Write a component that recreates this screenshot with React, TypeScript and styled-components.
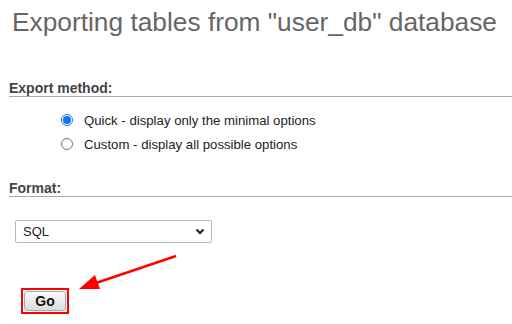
import React from "react";
import styled, { createGlobalStyle } from "styled-components";

const Global = createGlobalStyle`
  html, body { margin: 0; padding: 0; background: #fff; }
  body { font-family: "Liberation Sans", Arial, sans-serif; width: 512px; height: 324px; overflow: hidden; }
`;

const Page = styled.div`
  position: relative;
  width: 512px;
  height: 324px;
  padding: 6px 0 0 9px;
  box-sizing: border-box;
`;

const Title = styled.h2`
  margin: 0 0 0 3px;
  font-size: 26.3px;
  font-weight: normal;
  color: #666;
  line-height: 32px;
  white-space: nowrap;
`;

const Section = styled.div<{ $top: number }>`
  margin-top: ${(p) => p.$top}px;
`;

const Legend = styled.h3`
  margin: 0;
  font-size: 14px;
  font-weight: bold;
  color: #444;
  line-height: 16px;
  padding-bottom: 0;
  border-bottom: 1px solid #aaa;
`;

const Options = styled.div`
  display: flex;
  flex-direction: column;
  gap: 8px;
  padding: 15px 0 0 52px;
`;

const OptionRow = styled.label`
  display: flex;
  align-items: center;
  gap: 11px;
  font-size: 13.2px;
  color: #222;
  height: 16px;
`;

const Radio = styled.span<{ $checked?: boolean }>`
  width: 12px;
  height: 12px;
  border-radius: 50%;
  box-sizing: border-box;
  border: ${(p) => (p.$checked ? "1px solid #1a73e8" : "1px solid #777")};
  background: #fff;
  display: flex;
  align-items: center;
  justify-content: center;
  &::after {
    content: "";
    display: ${(p) => (p.$checked ? "block" : "none")};
    width: 8px;
    height: 8px;
    border-radius: 50%;
    background: #1a73e8;
  }
`;

const SelectBox = styled.div`
  margin: 23px 0 0 6px;
  width: 197px;
  height: 23px;
  box-sizing: border-box;
  border: 1px solid #b8b8b8;
  border-radius: 2px;
  display: flex;
  align-items: center;
  justify-content: space-between;
  padding: 0 6px 0 7px;
  font-size: 13px;
  color: #222;
`;

const ButtonFrame = styled.div`
  margin: 45px 0 0 12px;
  width: 48px;
  height: 26px;
  box-sizing: border-box;
  border: 2px solid #f00;
  padding: 1px;
  display: flex;
`;

const GoButton = styled.button`
  flex: 1;
  margin: 0;
  padding: 0;
  border: 1px solid #aaa;
  border-radius: 3px;
  background: linear-gradient(#fafafa, #dcdcdc);
  font-family: "Liberation Sans", Arial, sans-serif;
  font-weight: bold;
  font-size: 14px;
  color: #111;
`;

const Arrow = styled.svg`
  position: absolute;
  left: 0;
  top: 0;
  pointer-events: none;
`;

export default function App() {
  return (
    <>
      <Global />
      <Page>
        <Title>Exporting tables from "user_db" database</Title>
        <Section $top={42}>
          <Legend>Export method:</Legend>
          <Options>
            <OptionRow>
              <Radio $checked />
              Quick - display only the minimal options
            </OptionRow>
            <OptionRow>
              <Radio />
              Custom - display all possible options
            </OptionRow>
          </Options>
        </Section>
        <Section $top={28}>
          <Legend>Format:</Legend>
          <SelectBox>
            <span>SQL</span>
            <svg width="10" height="7" viewBox="0 0 10 7">
              <path d="M1.5 1.5 L5 5 L8.5 1.5" stroke="#222" strokeWidth="2" fill="none" />
            </svg>
          </SelectBox>
        </Section>
        <ButtonFrame>
          <GoButton>Go</GoButton>
        </ButtonFrame>
        <Arrow width="512" height="324" viewBox="0 0 512 324">
          <line x1="176" y1="256" x2="96" y2="283" stroke="#f00" strokeWidth="2.5" />
          <polygon points="79,289 95,275 100,289" fill="#f00" />
        </Arrow>
      </Page>
    </>
  );
}
